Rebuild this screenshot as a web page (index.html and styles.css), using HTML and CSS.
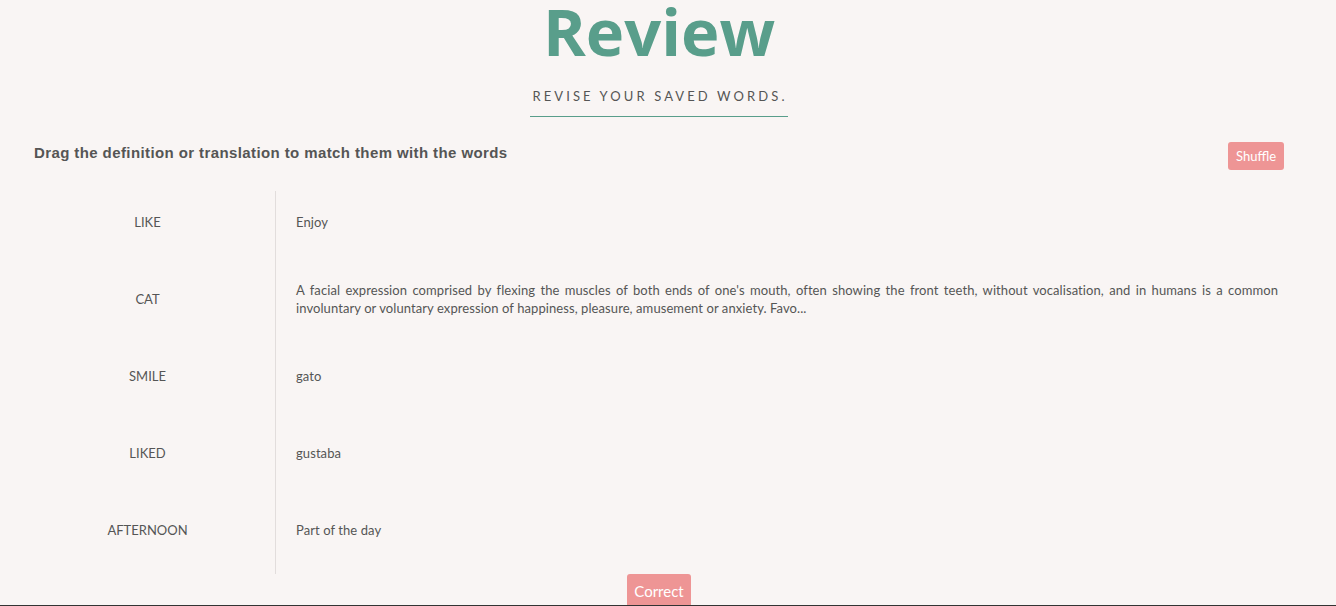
FILE: index.html
```html
<!DOCTYPE html>
<html lang="en">
<head>
<meta charset="utf-8">
<title>Review</title>
<link rel="stylesheet" href="styles.css">
</head>
<body>
<div class="page">
  <header class="hero">
    <h1 class="title">Review</h1>
    <p class="subtitle">REVISE YOUR SAVED WORDS.</p>
  </header>
  <main class="board">
    <div class="board-head">
      <h2 class="instructions">Drag the definition or translation to match them with the words</h2>
      <button class="btn btn-shuffle">Shuffle</button>
    </div>
    <div class="match">
      <div class="words">
        <div class="row">LIKE</div>
        <div class="row">CAT</div>
        <div class="row">SMILE</div>
        <div class="row">LIKED</div>
        <div class="row">AFTERNOON</div>
      </div>
      <div class="defs">
        <div class="row"><p>Enjoy</p></div>
        <div class="row"><p>A facial expression comprised by flexing the muscles of both ends of one's mouth, often showing the front teeth, without vocalisation, and in humans is a common involuntary or voluntary expression of happiness, pleasure, amusement or anxiety. Favo...</p></div>
        <div class="row"><p>gato</p></div>
        <div class="row"><p>gustaba</p></div>
        <div class="row"><p>Part of the day</p></div>
      </div>
    </div>
    <div class="actions">
      <button class="btn btn-correct">Correct</button>
    </div>
  </main>
</div>
<footer class="footer"></footer>
</body>
</html>
```

FILE: styles.css
```css
* { box-sizing: border-box; }
html, body { margin: 0; padding: 0; }
body {
  background: #f9f5f4;
  color: #555;
  font-family: "Lato", "Noto Sans", sans-serif;
}
.page {
  padding-right: 18px;
}
.hero {
  display: flex;
  flex-direction: column;
  align-items: center;
}
.title {
  margin: 0;
  font-family: "Open Sans", "DejaVu Sans", sans-serif;
  font-weight: 700;
  font-size: 65px;
  line-height: 62px;
  color: #599e8b;
}
.subtitle {
  margin: 26px 0 0;
  padding: 0 0 12px 2px;
  border-bottom: 1px solid #599e8b;
  font-size: 13px;
  letter-spacing: 3.1px;
  color: #555;
  line-height: 16px;
}
.board {
  padding: 0 20px;
}
.board-head {
  display: flex;
  justify-content: space-between;
  align-items: flex-start;
  padding: 27px 14px 0 14px;
  height: 74px;
}
.instructions {
  margin: 0;
  font-family: "Liberation Sans", "Noto Sans", sans-serif;
  font-size: 15px;
  font-weight: 700;
  color: #555;
  line-height: 18px;
  letter-spacing: 0.4px;
}
.btn {
  border: none;
  border-radius: 3px;
  background: #ee9595;
  color: #fff;
  font-family: "Lato", sans-serif;
  cursor: pointer;
}
.btn-shuffle {
  margin-top: -2px;
  height: 28px;
  padding: 0 8px;
  font-size: 13px;
}
.match {
  display: flex;
}
.words {
  width: 256px;
  flex: none;
  border-right: 1px solid #e2dddc;
  padding-bottom: 11px;
  display: flex;
  flex-direction: column;
  gap: 13px;
}
.defs {
  flex: 1;
  min-width: 0;
  display: flex;
  flex-direction: column;
  gap: 13px;
  padding-right: 20px;
}
.row {
  height: 64px;
  display: flex;
  align-items: center;
  font-size: 13px;
  padding-bottom: 2px;
}
.words .row {
  justify-content: center;
  color: #555;
}
.defs .row {
  padding-left: 20px;
}
.defs p {
  margin: 0;
  line-height: 18px;
  text-align: justify;
  width: 100%;
  letter-spacing: 0.08px;
}
.actions {
  display: flex;
  justify-content: center;
}
.btn-correct {
  height: 31px;
  padding: 3px 7px 0;
  font-size: 15px;
  border-radius: 3px 3px 0 0;
}
.footer {
  border-top: 1px solid #333;
  height: 10px;
}
```
